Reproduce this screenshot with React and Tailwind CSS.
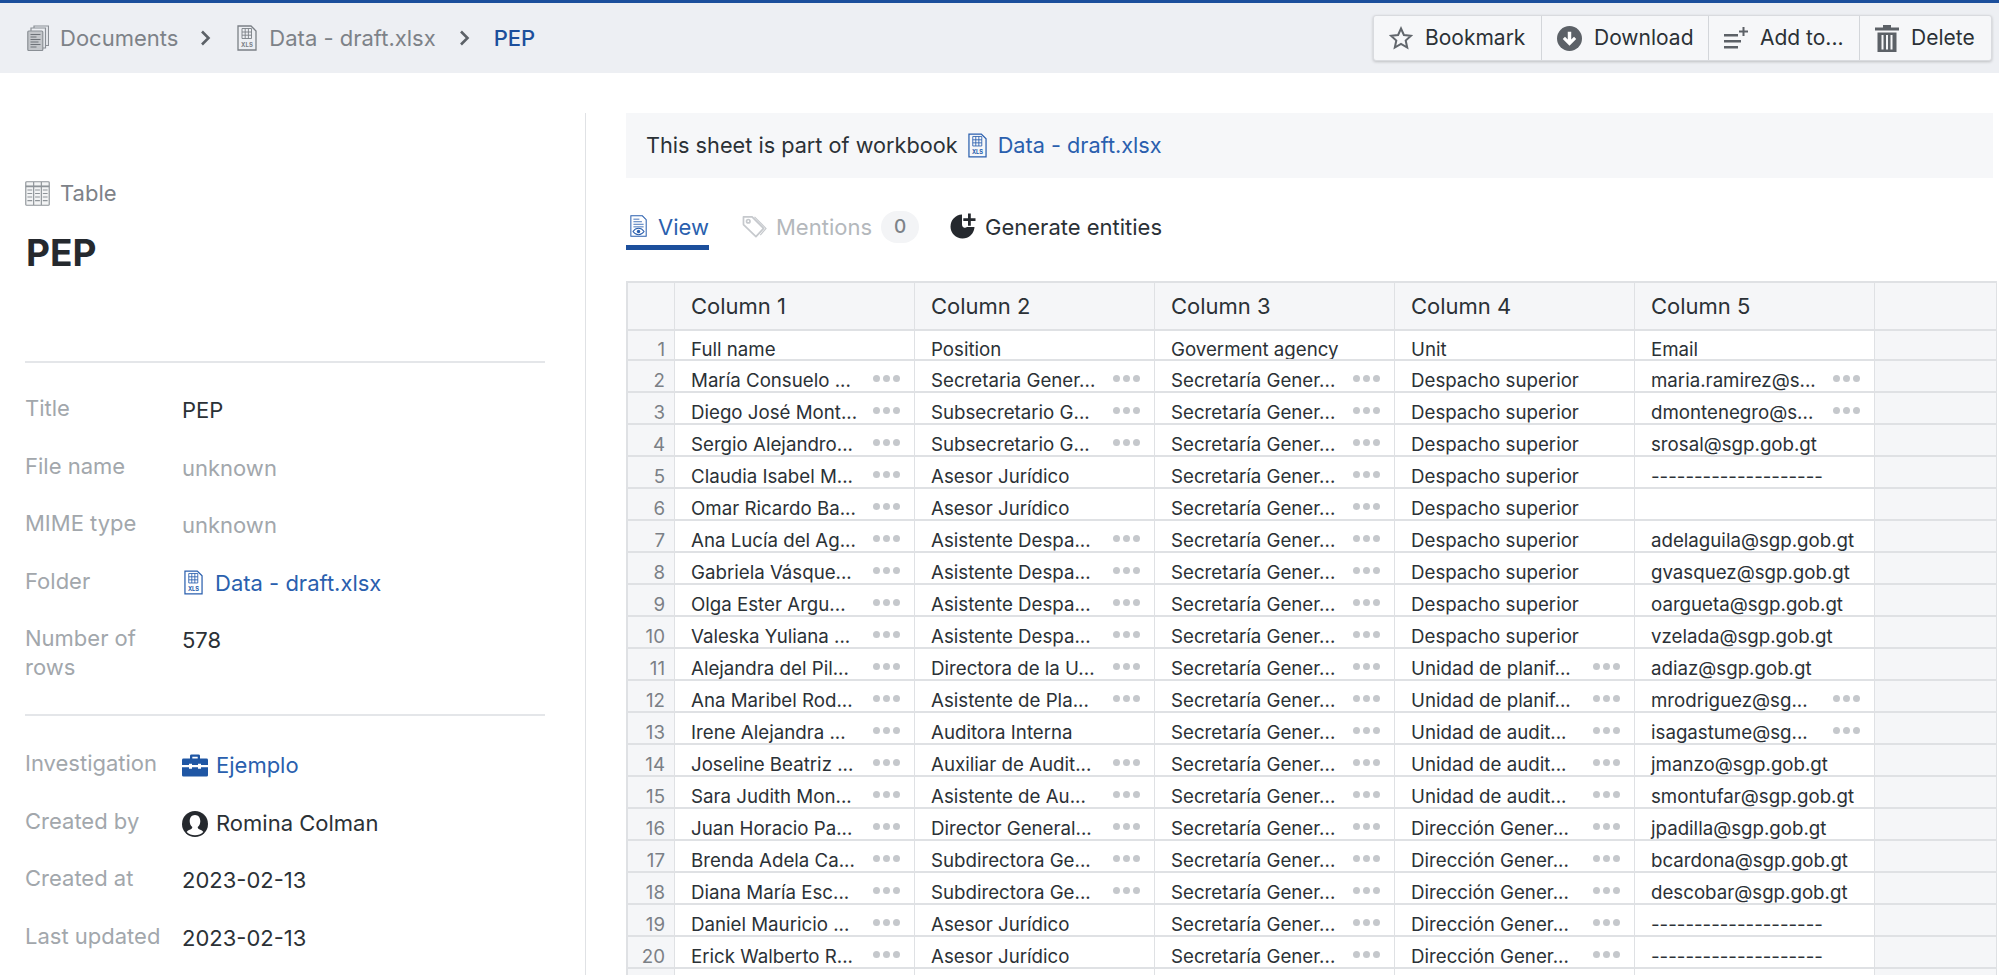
import { Fragment } from "react";

const FONT = "font-['Inter','Liberation_Sans',sans-serif]";

function XlsIcon({ className, color = "#7b8086" }) {
  return (
    <svg viewBox="0 0 20 26" className={className} fill="none" stroke={color}>
      <path d="M1 1h13l5 5v19H1z" strokeWidth="1.300" />
      <path d="M5 3.500h9.500v10H5zM5 7h9.500M5 10.200h9.500M8.200 3.500v10M11.400 3.500v10" strokeWidth="0.900" />
      <text x="10" y="21.500" fontSize="6" fontWeight="700" textAnchor="middle" fill={color} stroke="none" fontFamily="Inter">XLS</text>
    </svg>
  );
}

function DocsIcon({ className }) {
  return (
    <svg viewBox="0 0 22 26" className={className} fill="none" stroke="#8a8f95" strokeWidth="1.200">
      <path d="M7 3V1h14.500v19.500H19" />
      <path d="M4 6V3h14.500v20H16" />
      <rect x="0.800" y="6" width="15" height="19.500" rx="1" fill="#c3c6ca" />
      <path d="M3.500 9.500h10M3.500 12h6M3.500 14.500h10M3.500 17h8M3.500 19.500h10M3.500 22h6" strokeWidth="1.100" stroke="#6e7379" />
    </svg>
  );
}

function TableIcon() {
  return (
    <svg viewBox="0 0 26 28" className="w-[25px] h-[25px]" fill="none" stroke="#8f9499" strokeWidth="1.200" preserveAspectRatio="none">
      <rect x="0.800" y="0.800" width="24.400" height="26.400" rx="1" fill="#f3f4f5" />
      <path d="M0.800 6h24.400" strokeWidth="2" />
      <path d="M9 1v26M17 1v26M2.500 10h5M2.500 14h5M2.500 18h5M2.500 22h5M10.500 10h5M10.500 14h5M10.500 18h5M10.500 22h5M18.500 10h5M18.500 14h5M18.500 18h5M18.500 22h5" />
    </svg>
  );
}

function ViewIcon() {
  return (
    <svg viewBox="0 0 20 26" className="mt-[2px] w-[20px] h-[26px]" fill="none" stroke="#2a5fae" strokeWidth="1.200">
      <path d="M1 1h13.500l4.500 4.500V25H1z" />
      <path d="M4 5h7M4 8h10M4 11h12M4 14h12" strokeWidth="1" />
      <path d="M3.500 19.500c3.500-5 9.500-5 13 0-3.500 5-9.500 5-13 0z" />
      <circle cx="10" cy="19.500" r="2" fill="#2a5fae" stroke="none" />
    </svg>
  );
}

function TagIcon() {
  return (
    <svg viewBox="0 0 26 24" className="mt-[4px] w-[25px] h-[23px]" fill="none" stroke="#c6c9cd" strokeWidth="1.800">
      <path d="M1.500 2h9l12 12-8 8.500L1.500 10z" strokeLinejoin="round" />
      <circle cx="6.500" cy="6.500" r="1.800" />
      <path d="M13 2l12 12-6 7" strokeWidth="1.200" />
    </svg>
  );
}

function GenerateIcon() {
  return (
    <svg viewBox="0 0 26 26" className="mt-[2px] w-[26px] h-[26px]" fill="#25292e">
      <path d="M12 1.500a12 12 0 1 0 12.500 12.500h-7.500a3 3 0 0 1-5-2.500z" />
      <path d="M18 .5h2.800v4.700h4.700V8h-4.700v4.700H18V8h-4.700V5.200H18z" />
    </svg>
  );
}

function BriefcaseIcon() {
  return (
    <svg viewBox="0 0 26 25" className="mt-[3px] w-[26px] h-[23px]" fill="#1f56a4" preserveAspectRatio="none">
      <path d="M8 5V2a1.500 1.500 0 0 1 1.500-1.500h7A1.500 1.500 0 0 1 18 2v3h6.500A1.500 1.500 0 0 1 26 6.500V12h-7v-1.500h-3V12h-6v-1.500H7V12H0V6.500A1.500 1.500 0 0 1 1.500 5zm2.300 0h5.400V3h-5.400z" />
      <path d="M0 14.500h7V16h3v-1.500h6V16h3v-1.500h7V23a1.500 1.500 0 0 1-1.500 1.500h-23A1.500 1.500 0 0 1 0 23z" />
    </svg>
  );
}

function PersonIcon() {
  return (
    <svg viewBox="0 0 26 26" className="mt-[2px] w-[26px] h-[26px]">
      <circle cx="13" cy="13" r="13" fill="#25292e" />
      <path d="M13 4c3.500 0 5.300 2.800 5.300 6.300 0 2.600-1.100 4.700-2.600 5.700 0 1.300.6 1.900 2 2.500 1.800.7 3 1.500 3.600 2.400a12 12 0 0 1-16.600 0c.6-.9 1.800-1.700 3.600-2.400 1.400-.6 2-1.200 2-2.500-1.500-1-2.600-3.100-2.600-5.700C7.700 6.800 9.500 4 13 4z" fill="#fff" />
    </svg>
  );
}

function StarIcon() {
  return (
    <svg viewBox="0 0 24 24" className="w-[24px] h-[24px]" fill="none" stroke="#62676d" strokeWidth="2" strokeLinejoin="miter">
      <path d="M12 2.500l2.900 6.500 7.100.8-5.300 4.700 1.500 7-6.200-3.600-6.200 3.600 1.500-7L2 9.800l7.100-.8z" />
    </svg>
  );
}

function DownloadIcon() {
  return (
    <svg viewBox="0 0 26 26" className="w-[25px] h-[25px]">
      <circle cx="13" cy="13" r="13" fill="#5c6167" />
      <path d="M11.200 6h3.600v8l2.900-2.800 2.300 2.400L13 20.500l-7-6.900 2.300-2.400 2.900 2.800z" fill="#fff" />
    </svg>
  );
}

function AddToIcon() {
  return (
    <svg viewBox="0 0 24 22" className="w-[24px] h-[22px]" fill="#5c6167">
      <path d="M0 7h14v2.500H0zM0 13h17v2.500H0zM0 19h14v2.500H0z" />
      <path d="M18.500 0h2v3.500H24v2h-3.500V9h-2V5.500H15v-2h3.500z" />
    </svg>
  );
}

function TrashIcon() {
  return (
    <svg viewBox="0 0 24 27" className="w-[24px] h-[27px]" fill="#5c6167">
      <path d="M8 0h8v2.500h8v3H0v-3h8z" />
      <path d="M2.500 7.500h19V27h-19zM6.500 10v14.500h2V10zM11 10v14.500h2V10zM15.500 10v14.500h2V10z" fillRule="evenodd" />
    </svg>
  );
}

function Chevron() {
  return (
    <svg viewBox="0 0 11 16" className="w-[11px] h-[16px]" fill="none" stroke="#5c6167" strokeWidth="2.600">
      <path d="M2 1.500L8.500 8 2 14.500" />
    </svg>
  );
}

function Dots() {
  return (
    <span className="ml-auto mb-[4px] flex gap-[3px] shrink-0">
      <i className="w-[7px] h-[7px] rounded-full bg-[#c5c8cc]" />
      <i className="w-[7px] h-[7px] rounded-full bg-[#c5c8cc]" />
      <i className="w-[7px] h-[7px] rounded-full bg-[#c5c8cc]" />
    </span>
  );
}

function ToolButton({ icon, label, width, last }) {
  return (
    <button className={`flex items-center gap-[12px] pl-[15px] text-[21px] text-[#2b3136] ${width} ${last ? "" : "border-r border-[#d3d6da]"}`}>
      {icon}
      {label}
    </button>
  );
}

function Meta({ label, children, height = "h-[57.500px]", gap = "gap-[8px]" }) {
  return (
    <div className={`flex ${height}`}>
      <div className="w-[157px] shrink-0 text-[#a2a7ac] leading-[29px]">{label}</div>
      <div className={`flex items-start ${gap} pt-[2px] text-[#2b3136] leading-[29px]`}>{children}</div>
    </div>
  );
}

const sec = "Secretaría Gener...";
const des = "Despacho superior";
const plan = "Unidad de planif...";
const aud = "Unidad de audit...";
const dir = "Dirección Gener...";
const dash = "--------------------";

// [text, has dots] per cell
const rows = [
  [["Full name"], ["Position"], ["Goverment agency"], ["Unit"], ["Email"]],
  [["María Consuelo ...", 1], ["Secretaria Gener...", 1], [sec, 1], [des], ["maria.ramirez@s...", 1]],
  [["Diego José Mont...", 1], ["Subsecretario G...", 1], [sec, 1], [des], ["dmontenegro@s...", 1]],
  [["Sergio Alejandro...", 1], ["Subsecretario G...", 1], [sec, 1], [des], ["srosal@sgp.gob.gt"]],
  [["Claudia Isabel M...", 1], ["Asesor Jurídico"], [sec, 1], [des], [dash]],
  [["Omar Ricardo Ba...", 1], ["Asesor Jurídico"], [sec, 1], [des], [""]],
  [["Ana Lucía del Ag...", 1], ["Asistente Despa...", 1], [sec, 1], [des], ["adelaguila@sgp.gob.gt"]],
  [["Gabriela Vásque...", 1], ["Asistente Despa...", 1], [sec, 1], [des], ["gvasquez@sgp.gob.gt"]],
  [["Olga Ester Argu...", 1], ["Asistente Despa...", 1], [sec, 1], [des], ["oargueta@sgp.gob.gt"]],
  [["Valeska Yuliana ...", 1], ["Asistente Despa...", 1], [sec, 1], [des], ["vzelada@sgp.gob.gt"]],
  [["Alejandra del Pil...", 1], ["Directora de la U...", 1], [sec, 1], [plan, 1], ["adiaz@sgp.gob.gt"]],
  [["Ana Maribel Rod...", 1], ["Asistente de Pla...", 1], [sec, 1], [plan, 1], ["mrodriguez@sg...", 1]],
  [["Irene Alejandra ...", 1], ["Auditora Interna"], [sec, 1], [aud, 1], ["isagastume@sg...", 1]],
  [["Joseline Beatriz ...", 1], ["Auxiliar de Audit...", 1], [sec, 1], [aud, 1], ["jmanzo@sgp.gob.gt"]],
  [["Sara Judith Mon...", 1], ["Asistente de Au...", 1], [sec, 1], [aud, 1], ["smontufar@sgp.gob.gt"]],
  [["Juan Horacio Pa...", 1], ["Director General...", 1], [sec, 1], [dir, 1], ["jpadilla@sgp.gob.gt"]],
  [["Brenda Adela Ca...", 1], ["Subdirectora Ge...", 1], [sec, 1], [dir, 1], ["bcardona@sgp.gob.gt"]],
  [["Diana María Esc...", 1], ["Subdirectora Ge...", 1], [sec, 1], [dir, 1], ["descobar@sgp.gob.gt"]],
  [["Daniel Mauricio ...", 1], ["Asesor Jurídico"], [sec, 1], [dir, 1], [dash]],
  [["Erick Walberto R...", 1], ["Asesor Jurídico"], [sec, 1], [dir, 1], [dash]],
  [[""], [""], [""], [""], [""]],
];

function DataTable() {
  return (
    <div className="mt-[31px] w-[1371px] border-t-2 border-l-2 border-r border-[#dfe1e4] grid grid-cols-[47px_240px_240px_240px_240px_240px_121px] text-[18.700px] text-[#2b3136]">
      <div className="h-[48px] bg-[#f5f6f8] border-r border-b-2 border-[#dfe1e4]" />
      {[1, 2, 3, 4, 5].map((n) => (
        <div key={n} className="h-[48px] bg-[#f5f6f8] border-r border-b-2 border-[#dfe1e4] pl-[16px] flex items-center text-[22px]">
          Column {n}
        </div>
      ))}
      <div className="h-[48px] bg-[#f5f6f8] border-b-2 border-[#dfe1e4]" />
      {rows.map((row, i) => (
        <Fragment key={i}>
          <div className={`${i === 0 ? "h-[30px]" : "h-[32px]"} bg-[#f5f6f8] border-r border-b-2 border-[#dfe1e4] flex items-center justify-end pt-[9px] pr-[9px] leading-[21px] text-[#7b8086]`}>
            {i < 20 ? i + 1 : ""}
          </div>
          {row.map(([text, more], j) => (
            <div key={j} className={`${i === 0 ? "h-[30px]" : "h-[32px]"} border-r border-b-2 border-[#dfe1e4] pl-[16px] pr-[14px] pt-[9px] leading-[21px] flex items-center whitespace-nowrap overflow-hidden`}>
              {text}
              {more ? <Dots /> : null}
            </div>
          ))}
          <div className={`${i === 0 ? "h-[30px]" : "h-[32px]"} bg-[#f5f6f8] border-b-2 border-[#dfe1e4]`} />
        </Fragment>
      ))}
    </div>
  );
}

export default function App() {
  return (
    <div className={`${FONT} h-[975px] w-[1999px] overflow-hidden bg-white flex flex-col`}>
      {/* Top bar */}
      <header className="h-[73px] shrink-0 border-t-[3px] border-[#1c4f9c] bg-[#edeff3] flex items-center justify-between pl-[27px] pr-[7px]">
        <nav className="flex items-center text-[22px] text-[#7d8288]">
          <DocsIcon className="w-[22px] h-[26px]" />
          <span className="ml-[11px]">Documents</span>
          <span className="ml-[22px]"><Chevron /></span>
          <XlsIcon className="ml-[26px] w-[20px] h-[26px]" />
          <span className="ml-[12px]">Data - draft.xlsx</span>
          <span className="ml-[23px]"><Chevron /></span>
          <span className="ml-[24px] font-medium text-[#1c4f9c]">PEP</span>
        </nav>
        <div className="flex h-[46px] rounded-[3px] bg-[#f6f7f9] border border-[#d9dbdf] shadow-[0_1px_3px_rgba(0,0,0,0.2)]">
          <ToolButton icon={<StarIcon />} label="Bookmark" width="w-[168px]" />
          <ToolButton icon={<DownloadIcon />} label="Download" width="w-[167px]" />
          <ToolButton icon={<AddToIcon />} label="Add to..." width="w-[151px]" />
          <ToolButton icon={<TrashIcon />} label="Delete" width="w-[131px]" last />
        </div>
      </header>

      <div className="flex-1 flex pt-[40px] min-h-0">
        {/* Side panel */}
        <aside className="w-[586px] shrink-0 border-r border-[#e0e2e5] pl-[25px] pr-[40px] pt-[64px] text-[22px]">
          <div className="flex items-center gap-[10px] text-[#7d8288]">
            <TableIcon />
            Table
          </div>
          <h1 className="mt-[21px] ml-[1px] text-[37px] leading-[44px] font-bold text-[#25292e]">PEP</h1>
          <div className="mt-[86px] h-[353px] border-t-2 border-[#e4e6e9] pt-[31px]">
            <Meta label="Title">PEP</Meta>
            <Meta label="File name"><span className="text-[#a2a7ac]">unknown</span></Meta>
            <Meta label="MIME type"><span className="text-[#a2a7ac]">unknown</span></Meta>
            <Meta label="Folder" gap="gap-[12px]">
              <XlsIcon className="mt-[1px] w-[19px] h-[25px] ml-[2px]" color="#2a5fae" />
              <span className="text-[#2a5fae]">Data - draft.xlsx</span>
            </Meta>
            <Meta label={<>Number of<br />rows</>} height="h-[78px]">578</Meta>
          </div>
          <div className="border-t-2 border-[#e4e6e9] pt-[33px]">
            <Meta label="Investigation">
              <BriefcaseIcon />
              <span className="text-[#2a5fae]">Ejemplo</span>
            </Meta>
            <Meta label="Created by">
              <PersonIcon />
              Romina Colman
            </Meta>
            <Meta label="Created at">2023-02-13</Meta>
            <Meta label="Last updated">2023-02-13</Meta>
          </div>
        </aside>

        {/* Sheet view */}
        <main className="flex-1 pl-[40px] min-w-0">
          <div className="h-[65px] w-[1367px] bg-[#f6f7f9] flex items-center pl-[20px] text-[21.700px] text-[#2b3136]">
            This sheet is part of workbook
            <XlsIcon className="ml-[10px] w-[19px] h-[25px]" color="#2a5fae" />
            <span className="ml-[11px] text-[#2a5fae]">Data - draft.xlsx</span>
          </div>
          <div className="mt-[33px] flex items-start text-[22px] h-[39px]">
            <div className="h-[39px] w-[83px] border-b-[5px] border-[#1c4f9c] flex items-start gap-[11px] pl-[4px] text-[#2a5fae]">
              <ViewIcon />
              View
            </div>
            <div className="ml-[33px] flex items-start gap-[9px] text-[#b4b8bc]">
              <TagIcon />
              Mentions
              <span className="w-[38px] h-[32px] rounded-full bg-[#f3f4f6] flex items-center justify-center text-[19px] font-medium text-[#7d8288]">0</span>
            </div>
            <div className="ml-[31px] flex items-start gap-[9px] text-[#2b3136]">
              <GenerateIcon />
              Generate entities
            </div>
          </div>
          <DataTable />
        </main>
      </div>
    </div>
  );
}
